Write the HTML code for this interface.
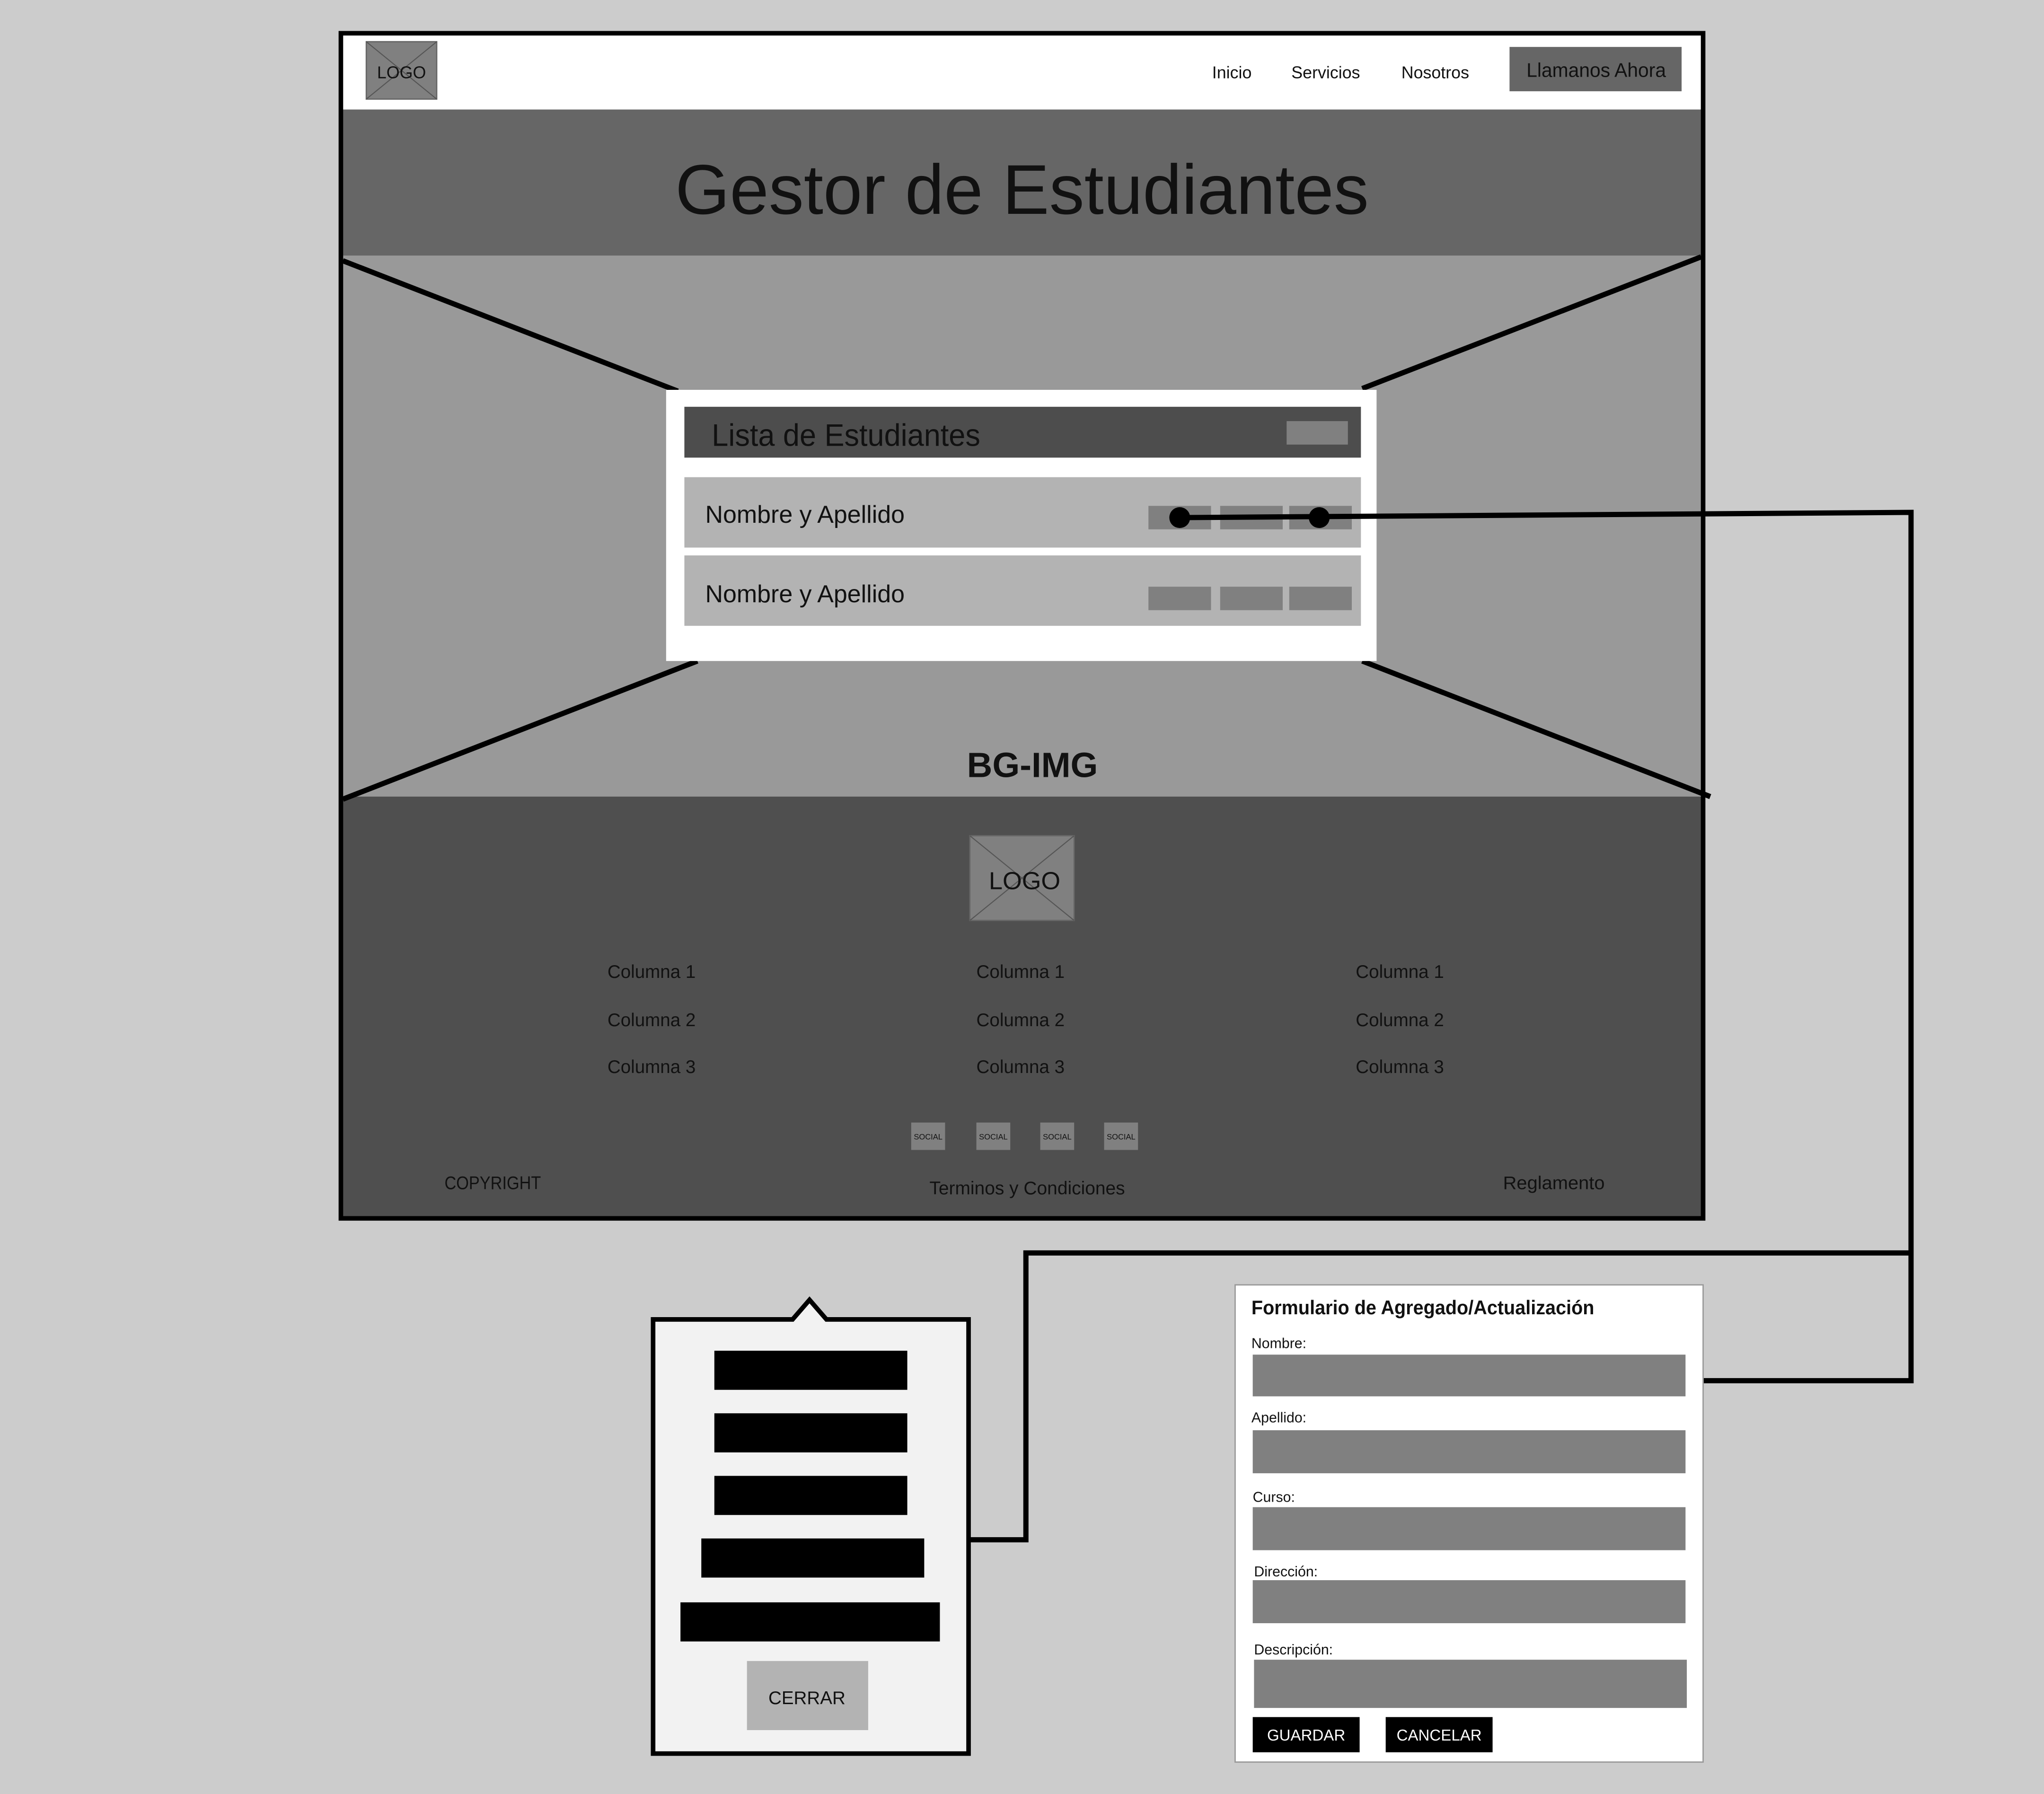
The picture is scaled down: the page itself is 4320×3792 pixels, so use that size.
<!DOCTYPE html>
<html><head><meta charset="utf-8"><style>
html,body{margin:0;padding:0;background:#ccc;width:4320px;height:3792px;overflow:hidden}
svg{display:block}
text{font-family:"Liberation Sans",sans-serif;fill:#111}
</style></head><body>
<svg width="4320" height="3792" viewBox="0 0 1568 1376" preserveAspectRatio="none">
<rect width="1568" height="1376" fill="#cccccc"/>
<rect x="261" y="24" width="1046" height="911" fill="#4f4f4f"/>
<rect x="263" y="26" width="1042" height="58" fill="#fff"/>
<rect x="281" y="32" width="54" height="44" fill="#808080" stroke="#666" stroke-width="1"/>
<line x1="281" y1="32" x2="335" y2="76" stroke="#555" stroke-width="0.8"/><line x1="335" y1="32" x2="281" y2="76" stroke="#555" stroke-width="0.8"/>
<text x="308" y="60" font-size="13" text-anchor="middle">LOGO</text>
<text x="945" y="60" font-size="13" text-anchor="middle">Inicio</text>
<text x="1017" y="60" font-size="13" text-anchor="middle">Servicios</text>
<text x="1101" y="60" font-size="13" text-anchor="middle">Nosotros</text>
<rect x="1158" y="36" width="132" height="34" fill="#666"/>
<text x="1171" y="59" font-size="15" textLength="107" lengthAdjust="spacingAndGlyphs">Llamanos Ahora</text>
<rect x="263" y="84" width="1042" height="112" fill="#666"/>
<text x="518" y="164" font-size="54" textLength="532" lengthAdjust="spacingAndGlyphs">Gestor de Estudiantes</text>
<rect x="263" y="196" width="1042" height="415" fill="#999"/>
<g stroke="#000" stroke-width="4" fill="none">
<line x1="263" y1="200" x2="520" y2="300"/>
<line x1="1305" y1="197" x2="1045" y2="298"/>
<line x1="263" y1="613" x2="535" y2="507"/>
<line x1="1045" y1="507" x2="1312" y2="611"/>
</g>
<text x="792" y="596" font-size="27" font-weight="bold" text-anchor="middle">BG-IMG</text>
<rect x="511" y="299" width="545" height="208" fill="#fff"/>
<rect x="525" y="312" width="519" height="39" fill="#4d4d4d"/>
<text x="546" y="342" font-size="24" textLength="206" lengthAdjust="spacingAndGlyphs">Lista de Estudiantes</text>
<rect x="987" y="323" width="47" height="18" fill="#808080"/>
<rect x="525" y="366" width="519" height="54" fill="#b3b3b3"/>
<text x="541" y="401" font-size="19" textLength="153" lengthAdjust="spacingAndGlyphs">Nombre y Apellido</text>
<rect x="881" y="388" width="48" height="18" fill="#808080"/><rect x="936" y="388" width="48" height="18" fill="#808080"/><rect x="989" y="388" width="48" height="18" fill="#808080"/>
<rect x="525" y="426" width="519" height="54" fill="#b3b3b3"/>
<text x="541" y="462" font-size="19" textLength="153" lengthAdjust="spacingAndGlyphs">Nombre y Apellido</text>
<rect x="881" y="450" width="48" height="18" fill="#808080"/><rect x="936" y="450" width="48" height="18" fill="#808080"/><rect x="989" y="450" width="48" height="18" fill="#808080"/>
<rect x="744" y="641" width="80" height="65" fill="#808080" stroke="#666" stroke-width="1"/>
<line x1="744" y1="641" x2="824" y2="706" stroke="#555" stroke-width="0.8"/><line x1="824" y1="641" x2="744" y2="706" stroke="#555" stroke-width="0.8"/>
<text x="786" y="682" font-size="19" text-anchor="middle">LOGO</text>
<g font-size="14">
<text x="466" y="750">Columna 1</text><text x="466" y="787">Columna 2</text><text x="466" y="823">Columna 3</text>
<text x="749" y="750">Columna 1</text><text x="749" y="787">Columna 2</text><text x="749" y="823">Columna 3</text>
<text x="1040" y="750">Columna 1</text><text x="1040" y="787">Columna 2</text><text x="1040" y="823">Columna 3</text>
<text x="341" y="912" textLength="74" lengthAdjust="spacingAndGlyphs">COPYRIGHT</text>
<text x="713" y="916" textLength="150" lengthAdjust="spacingAndGlyphs">Terminos y Condiciones</text>
<text x="1153" y="912" textLength="78" lengthAdjust="spacingAndGlyphs">Reglamento</text>
</g>
<g font-size="6" text-anchor="middle">
<rect x="699" y="861" width="26" height="21" fill="#808080"/><text x="712" y="874">SOCIAL</text>
<rect x="749" y="861" width="26" height="21" fill="#808080"/><text x="762" y="874">SOCIAL</text>
<rect x="798" y="861" width="26" height="21" fill="#808080"/><text x="811" y="874">SOCIAL</text>
<rect x="847" y="861" width="26" height="21" fill="#808080"/><text x="860" y="874">SOCIAL</text>
</g>
<rect x="261.5" y="25.5" width="1045" height="909" fill="none" stroke="#000" stroke-width="3.5"/>
<g stroke="#000" stroke-width="4" fill="none">
<polyline points="905,397 1466,393 1466,1059 1307,1059"/>
<polyline points="1466,961 787,961 787,1181 744,1181"/>
</g>
<circle cx="905" cy="397" r="8" fill="#000"/><circle cx="1012" cy="397" r="8" fill="#000"/>
<path d="M501,1012 L608,1012 L621,997 L634,1012 L743,1012 L743,1345 L501,1345 Z" fill="#f2f2f2" stroke="#000" stroke-width="3.5"/>
<rect x="548" y="1036" width="148" height="30" fill="#000"/>
<rect x="548" y="1084" width="148" height="30" fill="#000"/>
<rect x="548" y="1132" width="148" height="30" fill="#000"/>
<rect x="538" y="1180" width="171" height="30" fill="#000"/>
<rect x="522" y="1229" width="199" height="30" fill="#000"/>
<rect x="573" y="1274" width="93" height="53" fill="#b3b3b3"/>
<text x="619" y="1307" font-size="14" text-anchor="middle">CERRAR</text>
<rect x="947.5" y="985.5" width="359" height="366" fill="#fff" stroke="#999" stroke-width="1"/>
<text x="960" y="1008" font-size="15" font-weight="bold" textLength="263" lengthAdjust="spacingAndGlyphs">Formulario de Agregado/Actualización</text>
<g font-size="11">
<text x="960" y="1034">Nombre:</text>
<text x="960" y="1091">Apellido:</text>
<text x="961" y="1152">Curso:</text>
<text x="962" y="1209">Dirección:</text>
<text x="962" y="1269">Descripción:</text>
</g>
<rect x="961" y="1039" width="332" height="32" fill="#808080"/>
<rect x="961" y="1097" width="332" height="33" fill="#808080"/>
<rect x="961" y="1156" width="332" height="33" fill="#808080"/>
<rect x="961" y="1212" width="332" height="33" fill="#808080"/>
<rect x="962" y="1273" width="332" height="37" fill="#808080"/>
<rect x="961" y="1317" width="82" height="27" fill="#000"/>
<rect x="1063" y="1317" width="82" height="27" fill="#000"/>
<text x="1002" y="1335" font-size="12" text-anchor="middle" style="fill:#fff">GUARDAR</text>
<text x="1104" y="1335" font-size="12" text-anchor="middle" style="fill:#fff">CANCELAR</text>
</svg>
</body></html>
